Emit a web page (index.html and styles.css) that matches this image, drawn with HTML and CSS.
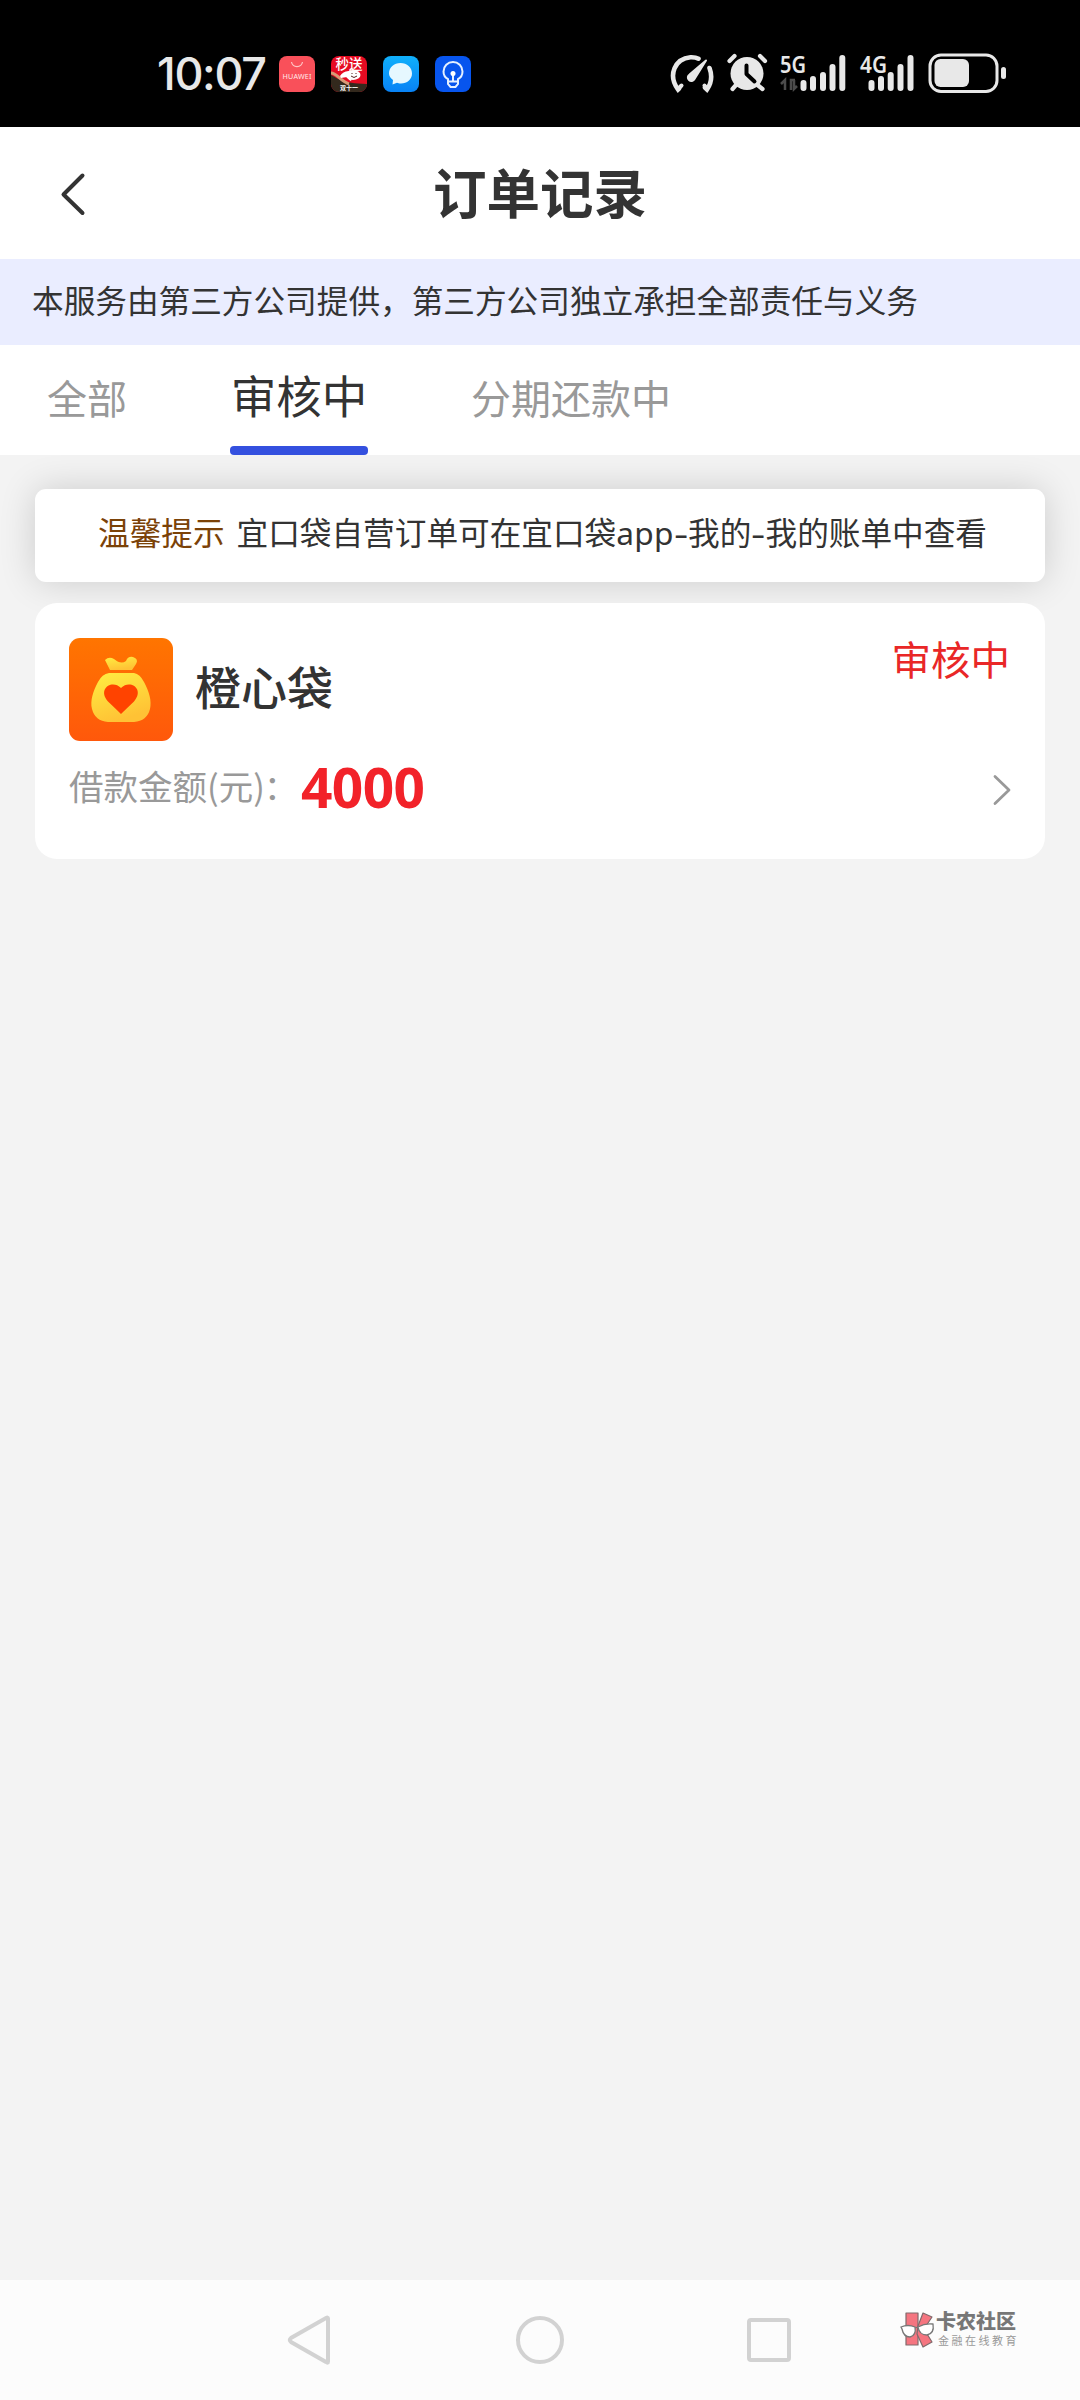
FILE: index.html
```html
<!DOCTYPE html>
<html lang="zh-CN">
<head>
<meta charset="utf-8">
<title>订单记录</title>
<link rel="stylesheet" href="styles.css">
</head>
<body>
<div class="screen">
  <div class="statusbar">
    <span class="clock">10:07</span>
    <div class="apps">
      <svg width="36" height="36" viewBox="0 0 36 36"><rect width="36" height="36" rx="8" fill="#f9505a"/><path d="M12.500 6a5.600 5.600 0 0 0 11 0" fill="none" stroke="#ffc5c5" stroke-width="1.200"/><text class="svg-text" x="18" y="23" font-size="7.200" text-anchor="middle" textLength="29" fill="#ffe9e9">HUAWEI</text></svg>
      <svg width="36" height="36" viewBox="0 0 36 36"><defs><clipPath id="r"><rect width="36" height="36" rx="8"/></clipPath></defs><g clip-path="url(#r)"><path fill="#e60b22" d="M0 0h36v36H0z"/><path d="M0 19c8 4 10 8 36 9v8H0z" fill="#33291d"/><path d="M0 17c6 0 9 8 18 11" stroke="#d99a76" stroke-width="3" fill="none"/><text class="svg-text" x="18" y="12.500" font-size="13.500" font-weight="500" text-anchor="middle" fill="#fff">秒送</text><ellipse cx="22" cy="19" rx="7.500" ry="5" fill="#fff"/><path d="M9 20c3-5 9-6 14-3l-3 8c-3-1-3-3-4-4l-6 1z" fill="#fff"/><path d="M20 20q3 3 6 0M21 17v1M25 17v1" stroke="#522" fill="none"/><text class="svg-text" x="18" y="34" font-size="6" font-weight="700" text-anchor="middle" fill="#fff">双十一</text></g></svg>
      <svg width="36" height="36" viewBox="0 0 36 36"><defs><linearGradient id="m" x2="0" y2="1"><stop stop-color="#10b0fb"/><stop offset="1" stop-color="#0882f5"/></linearGradient></defs><rect width="36" height="36" rx="8" fill="url(#m)"/><path d="M17.500 7C24 7 29 11.500 29 17.500S24 27.500 18 27.500c-2 0-3-.3-4-.7L9.500 28.500 10 24c-2.500-2-4-4-4-6.500C6 11.500 11 7 17.500 7z" fill="#e6f8ff"/></svg>
      <svg width="36" height="36" viewBox="0 0 36 36"><rect width="36" height="36" rx="8" fill="#0755ee"/><path d="M13 25.500v-2.300C10 21.500 8.500 19 8.500 15.500a9.500 9.500 0 0 1 19 0c0 3.500-1.500 6-4.500 7.700v2.300zM13 25.500V28l2.500 3h5l2.500-3v-2.500M18 18v7" fill="none" stroke="#e5f0ff" stroke-width="2"/><circle cx="18" cy="17.500" r="2.500" fill="#fff"/></svg>
    </div>
    <svg class="system" width="340" height="60" viewBox="0 -10 340 60">
      <g fill="none" stroke="#e8e8e8" stroke-width="4.600" stroke-linecap="round">
        <path d="M9 38.500l-1 1C-2.500 25 5 8.500 20.500 7.200q5-.2 8 1.500M39.500 18c2.800 7.500 2 15-2.500 21.500l-2-2"/>
        <path d="M8.500 38.500l3-3M37 38.500l-2.500-3" stroke-width="4"/>
      </g>
      <path d="M36 10.500L24.500 29a3.500 3.500 0 1 1-5-4.500z" fill="#e8e8e8" stroke="#e8e8e8" stroke-width="2" stroke-linejoin="round"/>
      <g stroke="#e8e8e8" stroke-width="4.200" stroke-linecap="round"><path d="M59.500 11l5-5M90 6l5 5M66 35l-3.500 4M87.500 35l5 4"/></g>
      <circle cx="77" cy="23.500" r="16.500" fill="#e8e8e8"/>
      <path d="M76.500 15.500V24l8 7.500" fill="none" stroke="#000" stroke-width="4" stroke-linecap="round" stroke-linejoin="round"/>
      <g class="svg-text" fill="#e8e8e8" font-size="24" font-weight="600"><text x="110" y="22.500" textLength="26" lengthAdjust="spacingAndGlyphs">5G</text><text x="190" y="22.500" textLength="27" lengthAdjust="spacingAndGlyphs">4G</text></g>
      <path d="M111 34l4-4v10M121 40V30l4 0M124 30v9l3-3" stroke="#4c4c4c" stroke-width="2.500" fill="none"/>
      <g stroke="#e8e8e8" stroke-width="6" stroke-linecap="round"><path d="M133.500 33v5M143 29v9M153 25v13M162.500 17v21M172.300 8v30M201.500 33v5M211 29v9M220.700 25v13M230.500 17v21M240.500 8v30"/></g>
      <rect x="260" y="5" width="67" height="36.500" rx="11" fill="none" stroke="#e8e8e8" stroke-width="3"/><rect x="264.500" y="9" width="34.500" height="28" rx="6" fill="#e8e8e8"/><rect x="331" y="17" width="5" height="12" rx="2.500" fill="#e8e8e8"/>
    </svg>
  </div>
  <header class="header">
    <svg class="back" width="30" height="48" viewBox="0 0 30 48"><path d="M24.500 5.500L5.500 24.500L24.500 43" fill="none" stroke="#333" stroke-width="4" stroke-linecap="round" stroke-linejoin="round"/></svg>
    <h1 class="title">订单记录</h1>
  </header>
  <div class="notice">本服务由第三方公司提供，第三方公司独立承担全部责任与义务</div>
  <nav class="tabs">
    <span class="tab">全部</span>
    <span class="tab tab-active">审核中</span>
    <span class="tab">分期还款中</span>
  </nav>
  <main class="content">
    <div class="tip"><span class="tip-label">温馨提示</span><span>宜口袋自营订单可在宜口袋<span class="latin">app</span><span class="dash">-</span>我的<span class="dash">-</span>我的账单中查看</span></div>
    <section class="order">
      <div class="order-head">
        <svg width="104" height="103" viewBox="0 0 104 103"><defs><linearGradient id="o" x2="0" y2="1"><stop stop-color="#ff7500"/><stop offset="1" stop-color="#ff580b"/></linearGradient><linearGradient id="y" x2=".4" y2="1"><stop stop-color="#ffee42"/><stop offset="1" stop-color="#ffc235"/></linearGradient></defs><rect width="104" height="103" rx="11" fill="url(#o)"/><path d="M36 22q4-4 9-1 7 6 12 2 2-5 7-4 6 2 3 7l-4 6H41z" fill="url(#y)"/><path d="M40 35h25q6 1 10 9c5 9 8 19 6 27q-3 12-16 13H39Q26 83 23 71c-2-8 1-18 6-27q4-8 11-9z" fill="url(#y)"/><path d="M52 76Q49 73 39 63.500C28 51 43 41 52 50c9-9 24 1 13 13.500Q55 73 52 76z" fill="#ff4300"/></svg>
        <span class="order-name">橙心袋</span>
        <span class="order-status">审核中</span>
      </div>
      <div class="order-row">
        <span class="label">借款金额(元)<span class="colon">：</span></span>
        <span class="amount">4000</span>
        <svg class="chevron" width="20" height="34" viewBox="0 0 20 34"><path d="M3 3.500L17 17L3 30.500" fill="none" stroke="#999" stroke-width="2.800" stroke-linecap="round" stroke-linejoin="round"/></svg>
      </div>
    </section>
  </main>
  <footer class="navbar">
    <svg width="48" height="52" viewBox="0 0 48 52"><path d="M42 4.500v43q0 2-2 .5L5 28q-2.500-2 0-4L40 4q2-1 2 .5z" fill="none" stroke="#d2d2d2" stroke-width="4"/></svg>
    <svg width="52" height="52" viewBox="0 0 52 52"><circle cx="26" cy="26" r="22" fill="none" stroke="#d2d2d2" stroke-width="4"/></svg>
    <svg width="48" height="52" viewBox="0 0 48 52"><rect x="4" y="6" width="40" height="40" rx="2" fill="none" stroke="#d2d2d2" stroke-width="4"/></svg>
    <div class="brand">
      <svg width="36" height="38" viewBox="0 0 36 38"><g fill="#f57580" stroke="#806a6c" stroke-width="1.200" stroke-linejoin="round"><path d="M6 2h12v32H6z"/><path d="M18 15l5-13 9 4-8 12 8 13-9 5-6-13z"/></g><g fill="#fff" stroke="#777" stroke-width="1.300"><path d="M1 16q7-3 14 0c1 6-1 9-5 10-5 0-7-3-8-8z"/><path d="M18 16q7-4 15-3c1 6-1 10-6 11-5 0-8-2-9-8zM15 17l3-1"/></g></svg>
      <div class="brand-text"><span class="brand-name">卡农社区</span><span class="brand-sub">金融在线教育</span></div>
    </div>
  </footer>
</div>
</body>
</html>
```
FILE: styles.css
```css
* { box-sizing: border-box; }
body { margin: 0; }
svg { display: block; flex: none; }
h1 { margin: 0; }
.screen {
  width: 1080px; height: 2400px; display: flex; flex-direction: column;
  background: #f3f3f3; color: #333; overflow: hidden; white-space: nowrap;
  font-family: "Noto Sans CJK SC", sans-serif;
}
.svg-text { font-family: "Noto Sans", "Noto Sans CJK SC", sans-serif; }
.statusbar { height: 127px; flex: none; background: #000; display: flex; padding: 40px 70px 0 157px; }
.clock { width: 122px; padding-top: 10px; font: 500 45px/47px Inter, sans-serif; letter-spacing: -1.3px; color: #e8e8e8; }
.apps { display: flex; gap: 16px; padding-top: 16px; }
.system { margin-left: auto; }
.header { height: 132px; flex: none; background: #fff; display: grid; grid-template-columns: 1fr auto 1fr; align-items: center; }
.back { margin-left: 58px; margin-top: 1px; }
.title { font-size: 53.500px; line-height: 80px; font-weight: 700; padding-bottom: 4px; }
.notice { height: 86px; flex: none; background: #eaedff; padding-left: 32px; font-size: 31.650px; line-height: 81px; }
.tabs { height: 110px; flex: none; background: #fff; display: flex; padding-left: 47px; }
.tab { font-size: 40px; line-height: 105px; color: #999; }
.tab-active { position: relative; width: 138px; margin: 0 103px; text-align: center; font-size: 45.500px; line-height: 99px; color: #333; }
.tab-active::after { content: ""; position: absolute; left: 0; bottom: 0; width: 100%; height: 9px; border-radius: 4px; background: #3450df; }
.content { flex: 1; padding: 34px 35px 0; display: flex; flex-direction: column; gap: 21px; }
.tip { height: 93px; background: #fff; border-radius: 11px; box-shadow: 0 0 36px rgba(0,0,0,.16); display: flex; gap: 12px; padding-left: 63px; font-size: 31.650px; line-height: 85px; }
.tip-label { color: #7b4207; }
.latin { font-family: "Noto Sans", sans-serif; letter-spacing: .3px; }
.dash { display: inline-block; font-family: "Noto Sans", sans-serif; transform: scaleX(1.400); padding: 0 2px; }
.order { height: 256px; background: #fff; border-radius: 22px; padding: 35px 35px 0 34px; }
.order-head { display: flex; }
.order-name { margin-left: 22px; font-size: 46px; line-height: 95px; font-weight: 500; }
.order-status { margin-left: auto; font-size: 39.500px; line-height: 40px; color: #e92727; }
.order-row { display: flex; align-items: center; height: 94px; }
.label { width: 232px; font-size: 34.500px; line-height: 88px; height: 94px; color: #999; }
.colon { margin-left: -1px; }
.amount { font: 700 55px/92px "Noto Sans", sans-serif; letter-spacing: -.6px; height: 94px; color: #f22229; }
.chevron { margin: 3px -2px 0 auto; }
.navbar { height: 120px; flex: none; background: #fcfcfc; display: flex; align-items: center; padding-left: 286px; }
.navbar > svg + svg { margin-left: 180px; }
.navbar > svg:nth-child(3) { margin-left: 179px; }
.brand { display: flex; margin: -21px 0 0 107px; }
.brand-text { display: flex; flex-direction: column; gap: 2px; }
.brand-name { font-size: 20px; line-height: 20px; font-weight: 900; color: #777; }
.brand-sub { font-size: 11px; line-height: 15px; letter-spacing: 2.500px; padding-left: 2px; color: #999; }
```
